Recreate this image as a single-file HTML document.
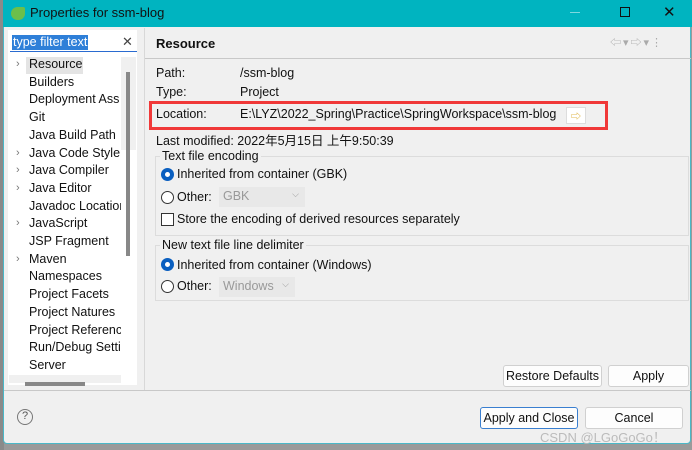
<!DOCTYPE html>
<html><head><style>
*{margin:0;padding:0;box-sizing:border-box}
body{width:692px;height:450px;overflow:hidden;background:#9a9a9a;font-family:"Liberation Sans","Noto Sans CJK SC",sans-serif;font-size:12.5px;color:#111;position:relative}
.a{position:absolute;white-space:nowrap}
.btn{position:absolute;background:#fdfdfd;border:1px solid #d0d0d0;border-radius:3px;text-align:center;line-height:20px;font-size:12.5px}
.rad{position:absolute;width:13px;height:13px;border:1px solid #333;border-radius:50%;background:#fff}
.rad.on{border:4px solid #0a5fc0}
</style></head><body>
<div class="a" style="left:0;top:0;width:4px;height:450px;background:#8a8a8a"></div>
<div class="a" style="left:3px;top:0;width:688px;height:444px;background:#f0f0f0;border:1px solid #4ab8c8;border-radius:0 0 4px 4px"></div>
<div class="a" style="left:3px;top:0;width:689px;height:27px;background:#00b4c0"></div>
<div class="a" style="left:11px;top:7px;width:14px;height:13px;background:#6cbf4a;border-radius:7px 2px 7px 7px"></div>
<div class="a" style="left:30px;top:5px;font-size:13px;color:#111">Properties for ssm-blog</div>
<div class="a" style="left:570px;top:12px;width:10px;height:1px;background:#7fd8df"></div>
<div class="a" style="left:620px;top:7px;width:10px;height:10px;border:1.5px solid #111"></div>
<div class="a" style="left:663px;top:3px;font-size:15px;color:#111">✕</div>
<!-- left panel -->
<div class="a" style="left:8px;top:30px;width:129px;height:355px;background:#fff"></div>
<div class="a" style="left:10px;top:34px;width:127px;height:18px;border-bottom:1px solid #2a6bd0"></div>
<div class="a" style="left:12px;top:35px;background:#2e7fd8;color:#fff;padding:0 1px;line-height:15px;font-size:12.5px">type filter text</div>
<div class="a" style="left:122px;top:34px;font-size:13px;color:#444">✕</div>
<div class="a" style="left:26px;top:57px;width:57px;height:17px;background:#e4e4e4"></div>
<div class="a" style="left:121px;top:57px;width:15px;height:93px;background:#f0f0f0"></div>
<div class="a" style="left:126px;top:72px;width:4px;height:184px;background:#888"></div>
<div class="a" style="left:9px;top:375px;width:112px;height:8px;background:#f0f0f0"></div>
<div class="a" style="left:25px;top:382px;width:60px;height:4px;background:#888"></div>
<div class="a" style="left:16px;top:56px;line-height:17.7px;color:#777;font-size:11px">
›<br><br><br><br><br>›<br>›<br>›<br><br>›<br><br>›</div>
<div class="a" style="left:29px;top:56px;line-height:17.7px;width:92px;overflow:hidden">Resource<br>Builders<br>Deployment Ass<br>Git<br>Java Build Path<br>Java Code Style<br>Java Compiler<br>Java Editor<br>Javadoc Location<br>JavaScript<br>JSP Fragment<br>Maven<br>Namespaces<br>Project Facets<br>Project Natures<br>Project Referenc<br>Run/Debug Setti<br>Server</div>
<div class="a" style="left:144px;top:28px;width:1px;height:362px;background:#d8d8d8"></div>
<!-- right -->
<div class="a" style="left:156px;top:36px;font-weight:bold;font-size:13px">Resource</div>
<div class="a" style="left:610px;top:34px;color:#aaa;font-size:11px;letter-spacing:2px">⇦▾⇨▾⋮</div>
<div class="a" style="left:145px;top:58px;width:546px;height:1px;background:#c8c8c8"></div>
<div class="a" style="left:156px;top:64px;line-height:19px">Path:<br>Type:</div>
<div class="a" style="left:240px;top:64px;line-height:19px">/ssm-blog<br>Project</div>
<div class="a" style="left:149px;top:101px;width:459px;height:29px;border:3px solid #f03838"></div>
<div class="a" style="left:156px;top:107px">Location:</div>
<div class="a" style="left:240px;top:107px">E:\LYZ\2022_Spring\Practice\SpringWorkspace\ssm-blog</div>
<div class="a" style="left:566px;top:107px;width:20px;height:17px;background:#fff;border:1px solid #ddd;color:#d9a520;font-size:10px;text-align:center">⇨</div>
<div class="a" style="left:156px;top:130px">Last modified: 2022年5月15日 上午9:50:39</div>
<div class="a" style="left:155px;top:156px;width:534px;height:80px;border:1px solid #dcdcdc"></div>
<div class="a" style="left:160px;top:149px;background:#f0f0f0;padding:0 2px">Text file encoding</div>
<div class="rad on" style="left:161px;top:168px"></div>
<div class="a" style="left:177px;top:167px">Inherited from container (GBK)</div>
<div class="rad" style="left:161px;top:191px"></div>
<div class="a" style="left:177px;top:190px">Other:</div>
<div class="a" style="left:219px;top:187px;width:86px;height:20px;background:#e8e8e8;color:#999;padding:2px 4px">GBK<span style="position:absolute;right:6px;top:2px;font-size:9px">⌵</span></div>
<div class="a" style="left:161px;top:213px;width:13px;height:13px;border:1px solid #333;background:#fff"></div>
<div class="a" style="left:177px;top:212px">Store the encoding of derived resources separately</div>
<div class="a" style="left:155px;top:245px;width:534px;height:56px;border:1px solid #dcdcdc"></div>
<div class="a" style="left:160px;top:238px;background:#f0f0f0;padding:0 2px">New text file line delimiter</div>
<div class="rad on" style="left:161px;top:258px"></div>
<div class="a" style="left:177px;top:258px">Inherited from container (Windows)</div>
<div class="rad" style="left:161px;top:280px"></div>
<div class="a" style="left:177px;top:279px">Other:</div>
<div class="a" style="left:219px;top:277px;width:76px;height:20px;background:#e8e8e8;color:#999;padding:2px 4px">Windows<span style="position:absolute;right:6px;top:2px;font-size:9px">⌵</span></div>
<div class="btn" style="left:503px;top:365px;width:99px;height:22px">Restore Defaults</div>
<div class="btn" style="left:608px;top:365px;width:81px;height:22px">Apply</div>
<div class="a" style="left:4px;top:390px;width:687px;height:1px;background:#c8c8c8"></div>
<div class="a" style="left:17px;top:409px;width:16px;height:16px;border:1.5px solid #777;border-radius:50%;text-align:center;font-size:11px;line-height:13px;color:#555">?</div>
<div class="btn" style="left:480px;top:407px;width:98px;height:22px;border-color:#3a7fd0">Apply and Close</div>
<div class="btn" style="left:585px;top:407px;width:98px;height:22px">Cancel</div>
<div class="a" style="left:540px;top:427px;color:#bbb;font-size:13px">CSDN @LGoGoGo！</div>
</body></html>
